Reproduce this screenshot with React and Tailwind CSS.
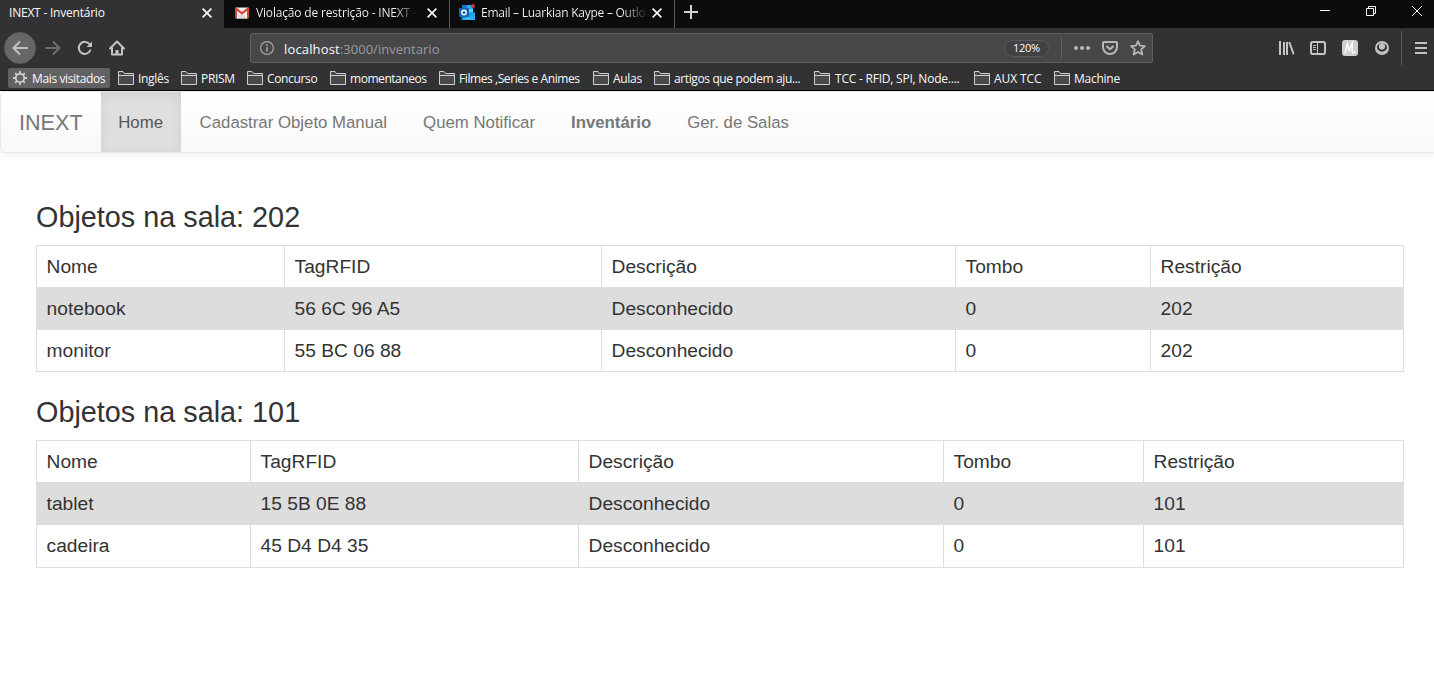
import React from "react";

const bookmarks = [
  { label: "Inglês", width: "w-[43px]", tracking: "tracking-[-0.3px]" },
  { label: "PRISM", width: "w-[46px]", tracking: "tracking-[-0.3px]" },
  { label: "Concurso", width: "w-[63px]", tracking: "tracking-[-0.35px]" },
  { label: "momentaneos", width: "w-[89px]", tracking: "tracking-[-0.45px]" },
  { label: "Filmes ,Series e Animes", width: "w-[134px]", tracking: "tracking-[-0.42px]" },
  { label: "Aulas", width: "w-[41px]", tracking: "tracking-[-0.3px]" },
  { label: "artigos que podem aju...", width: "w-[140px]", tracking: "tracking-[-0.38px]" },
  { label: "TCC - RFID, SPI, Node....", width: "w-[140px] pl-px", tracking: "tracking-[-0.22px]" },
  { label: "AUX TCC", width: "w-[60px]", tracking: "tracking-[-0.1px]" },
  { label: "Machine", width: "w-[60px]", tracking: "tracking-[-0.25px]" },
];

const headers = ["Nome", "TagRFID", "Descrição", "Tombo", "Restrição"];

const rooms = [
  {
    number: "202",
    spacing: "mb-6",
    columns: ["w-[248px]", "w-[317px]", "w-[354px]", "w-[195px]", "w-[253px]"],
    heights: ["h-[42px]", "h-[42px]", "h-[42px]"],
    rows: [
      ["notebook", "56 6C 96 A5", "Desconhecido", "0", "202"],
      ["monitor", "55 BC 06 88", "Desconhecido", "0", "202"],
    ],
  },
  {
    number: "101",
    spacing: "",
    columns: ["w-[214px]", "w-[328px]", "w-[365px]", "w-[200px]", "w-[260px]"],
    heights: ["h-[42px]", "h-[42px]", "h-[43px]"],
    rows: [
      ["tablet", "15 5B 0E 88", "Desconhecido", "0", "101"],
      ["cadeira", "45 D4 D4 35", "Desconhecido", "0", "101"],
    ],
  },
];

function Icon({ children, className = "" }) {
  return (
    <svg
      viewBox="0 0 16 16"
      width="16"
      height="16"
      fill="none"
      stroke="currentColor"
      strokeWidth="2"
      strokeLinecap="round"
      strokeLinejoin="round"
      className={"block shrink-0 " + className}
    >
      {children}
    </svg>
  );
}

function CloseIcon() {
  return (
    <svg viewBox="0 0 10 10" width="10" height="10" className="block shrink-0" stroke="#f9f9fa" strokeWidth="1.7">
      <path d="M0.6 0.6 9.4 9.4M9.4 0.6 0.6 9.4" />
    </svg>
  );
}

function FolderIcon() {
  return (
    <svg viewBox="0 0 16 16" width="16" height="16" className="block shrink-0">
      <path d="M0.5 14.5V1.500H5L6.500 3.500H15.500V14.500Z" fill="#4a4a4c" stroke="#cfcfd0" />
      <path d="M1 5.500H15" stroke="#cfcfd0" />
    </svg>
  );
}

function GearIcon() {
  return (
    <svg viewBox="0 0 16 16" width="16" height="16" className="block shrink-0" fill="none" stroke="#cfcfd0">
      <circle cx="8" cy="8" r="4.200" strokeWidth="1.800" />
      <path
        strokeWidth="1.800"
        d="M8 1V3.5M8 12.5V15M1 8H3.5M12.5 8H15M3.2 3.2 4.8 4.8M11.2 11.2 12.8 12.8M12.8 3.2 11.2 4.8M4.8 11.2 3.2 12.8"
      />
    </svg>
  );
}

function GmailIcon() {
  return (
    <svg viewBox="0 0 14 12" width="14" height="12" className="block shrink-0">
      <path d="M1 0.5H13V11.5H1Z" fill="#f1f1f1" />
      <path d="M2 11.5 7 6.5 12 11.5Z" fill="#dcdcdc" />
      <path d="M0 1.3C0 .6.5.3 1 .3L7 5 13 .3c.5 0 1 .3 1 1V10.700c0 .5-.4.8-.8.8H12V3.800L7 7.700 2 3.800V11.500H.8c-.4 0-.8-.3-.8-.8Z" fill="#dc4437" />
    </svg>
  );
}

function OutlookIcon() {
  return (
    <svg viewBox="0 0 17 17" width="17" height="17" className="block shrink-0">
      <path d="M3 1H14V9H3Z" fill="#28a8ea" />
      <path d="M3 1H8V6H3Z" fill="#0f78d4" />
      <path d="M10 5H14V9H10Z" fill="#50d9ff" />
      <path d="M2.500 8.500H16V16H2.500Z" fill="#1490df" />
      <path d="M16 8 9 12.500 16 16Z" fill="#28a8ea" />
      <path d="M3 16 9 12 16 16Z" fill="#35b8f1" />
      <rect x="0" y="4" width="10" height="9" rx=".7" fill="#0f64b5" />
      <circle cx="5" cy="8.500" r="2.200" fill="none" stroke="#fff" strokeWidth="1.400" />
      <circle cx="14" cy="2" r="2" fill="#d13438" />
    </svg>
  );
}

function TitleBar() {
  return (
    <div className="flex h-7 bg-[#0c0c0d] text-[12px] text-[#f9f9fa]">
      <div className="flex w-56 items-center bg-[#323234] pr-3 pb-[3px] pl-[9px]">
        <span className="grow whitespace-nowrap tracking-[-0.22px]">INEXT - Inventário</span>
        <CloseIcon />
      </div>
      <div className="flex w-[226px] items-center border-r border-[#59595b] pr-3 pb-[3px] pl-[11px]">
        <GmailIcon />
        <span className="mr-[9px] ml-[7px] w-0 grow bg-linear-to-r from-[#f9f9fa] from-85% to-transparent bg-clip-text whitespace-nowrap tracking-[-0.17px] text-transparent">
          Violação de restrição - INEXT -
        </span>
        <CloseIcon />
      </div>
      <div className="flex w-[225px] items-center border-r border-[#59595b] pr-3 pb-[3px] pl-[9px]">
        <OutlookIcon />
        <span className="mr-[6px] ml-[5px] w-0 grow bg-linear-to-r from-[#f9f9fa] from-85% to-[#f9f9fa]/10 bg-clip-text whitespace-nowrap tracking-[-0.25px] text-transparent">
          Email – Luarkian Kaype – Outlo
        </span>
        <CloseIcon />
      </div>
      <div className="flex grow items-center pb-[5px] pl-[9px]">
        <svg viewBox="0 0 14 14" width="14" height="14" stroke="#d0d0d1" strokeWidth="2">
          <path d="M7 0V14M0 7H14" />
        </svg>
      </div>
      <div className="flex items-center gap-9 pr-3 pb-[6px]">
        <svg viewBox="0 0 10 10" width="10" height="10" stroke="#fff">
          <path d="M0 4.500H10" />
        </svg>
        <svg viewBox="0 0 10 10" width="10" height="10" stroke="#fff" fill="none">
          <path d="M0.500 2.500H7.500V9.500H0.500ZM2.500 2.500V0.500H9.500V7.500H7.500" />
        </svg>
        <svg viewBox="0 0 10 10" width="10" height="10" stroke="#fff">
          <path d="M0 0 10 10M10 0 0 10" />
        </svg>
      </div>
    </div>
  );
}

function AddressBar() {
  return (
    <div className="flex h-[30px] w-[903px] items-center rounded-[2px] border border-[#5c5c5e] bg-[#474749] pl-[9px] text-[#b8b8b9]">
      <svg viewBox="0 0 14 14" width="14" height="14" className="block shrink-0" fill="none" stroke="#a6a6a8">
        <circle cx="7" cy="7" r="6.400" strokeWidth="1.200" />
        <path d="M7 6V10.500M7 3.300V4.900" strokeWidth="1.500" />
      </svg>
      <span className="ml-[10px] grow pt-[3px] text-[13px] font-normal tracking-[0.03px] text-[#9b9b9d]">
        <span className="tracking-[0.15px] text-[#f9f9fa]">localhost</span>:3000/inventario
      </span>
      <span className="flex h-[17px] w-[45px] items-center justify-center rounded-full border border-[#59595b] bg-[#414143] pt-px text-[11px] tracking-[-0.3px] text-[#f9f9fa]">
        120%
      </span>
      <span className="ml-3 h-[22px] w-px bg-[#606064]" />
      <svg viewBox="0 0 16 4" width="16" height="4" className="ml-3" fill="currentColor">
        <circle cx="2" cy="2" r="2" />
        <circle cx="8" cy="2" r="2" />
        <circle cx="14" cy="2" r="2" />
      </svg>
      <Icon className="ml-3">
        <path d="M2 2H14a1 1 0 0 1 1 1V7A7 7 0 0 1 1 7V3A1 1 0 0 1 2 2ZM5 6.500 8 9.300 11 6.500" />
      </Icon>
      <Icon className="mr-[6px] ml-3">
        <path
          strokeWidth="1.800"
          d="M8 1.200 10 5.600 14.900 6.100 11.200 9.400 12.300 14.500 8 11.900 3.700 14.500 4.800 9.400 1.100 6.100 6 5.600Z"
        />
      </Icon>
    </div>
  );
}

function Toolbar() {
  return (
    <div className="flex h-[38px] items-center bg-[#323234] pt-[2px] pl-1 text-[#c3c3c4]">
      <span className="flex size-8 shrink-0 items-center justify-center rounded-full border border-[#5c5c5e] bg-[#676769]">
        <Icon>
          <path d="M15 8H1.500M7.500 2 1.500 8 7.500 14" />
        </Icon>
      </span>
      <Icon className="ml-[9px] text-[#6f6f71]">
        <path d="M1 8H14.500M8.500 2 14.500 8 8.500 14" />
      </Icon>
      <Icon className="ml-4">
        <path d="M13.300 10.400A6 6 0 1 1 12.600 4.200" />
        <path d="M15 1.500V7H9.500Z" fill="currentColor" stroke="none" />
      </Icon>
      <Icon className="ml-4">
        <path d="M1 8.500 8 1.500 15 8.500M3 8V14.500H13V8" />
        <path d="M8 14V10" strokeWidth="3" strokeLinecap="butt" />
      </Icon>
      <div className="ml-[125px]">
        <AddressBar />
      </div>
      <div className="ml-[125px] flex items-center gap-4">
        <Icon>
          <path strokeLinecap="butt" d="M2 1V15M6 2V15M9 2V15M11.200 2 15.800 14.500" />
        </Icon>
        <Icon>
          <rect x="1" y="2" width="14" height="12" rx="1.800" />
          <path strokeWidth="1" d="M7.500 2V14M3.500 5.500H5.500M3.500 7.500H5.500M3.500 9.500H5.500" />
        </Icon>
        <svg viewBox="0 0 16 16" width="16" height="16" className="block shrink-0">
          <rect width="16" height="16" rx="3" fill="#cfcfd0" />
          <path
            d="M3 13.500C4 10 4.500 6 5.500 3.500C6 6 6.500 9 7 10.500C8 8 9 5 10.500 2.500C10.500 6 9.500 10 10.500 12.500C11.500 13.500 12.500 12.500 13.500 11.500"
            fill="none"
            stroke="#fff"
            strokeWidth="1.400"
          />
        </svg>
        <svg viewBox="0 0 16 16" width="16" height="16" className="block shrink-0">
          <circle cx="8" cy="8" r="7" fill="currentColor" />
          <path d="M3 8A5 5 0 0 1 13 8Q12.600 9.200 11.800 10Q8 13.600 4.200 10Q3.400 9.200 3 8Z" fill="#323234" />
          <path d="M5 6A3 3 0 0 1 11 6V7.500Q10.800 9.600 8 9.800Q5.200 9.600 5 7.500Z" fill="currentColor" />
        </svg>
      </div>
      <span className="ml-[11px] h-[34px] w-px bg-[#59595b]" />
      <svg viewBox="0 0 12 12" width="12" height="12" className="ml-[13px]" stroke="currentColor" strokeWidth="2">
        <path d="M0 1H12M0 6H12M0 11H12" />
      </svg>
    </div>
  );
}

function BookmarksBar() {
  return (
    <div className="flex h-[25px] items-center border-b border-black bg-[#323234] pl-2 text-[12px] whitespace-nowrap text-[#f9f9fa]">
      <div className="flex h-5 w-[102px] shrink-0 items-center gap-1 rounded-[2px] bg-[#626264] pl-1">
        <GearIcon />
        <span className="pt-[2px] tracking-[-0.37px]">Mais visitados</span>
      </div>
      <div className="flex pl-2">
        {bookmarks.map(({ label, width, tracking }) => (
          <div key={label} className="flex h-[18px] items-center gap-1">
            <FolderIcon />
            <span className={"pt-[2px] " + width + " " + tracking}>{label}</span>
          </div>
        ))}
      </div>
    </div>
  );
}

function Navbar() {
  return (
    <nav className="flex h-[62px] w-[1440px] items-stretch rounded-[5px] border border-[#e7e7e7] bg-linear-to-b from-white to-[#f8f8f8] text-[16.8px] text-[#777] shadow-[inset_0_1px_0_rgba(255,255,255,.15),0_1px_6px_rgba(0,0,0,.075)]">
      <a className="flex items-center px-[18px] pt-[2px] text-[21.6px]">INEXT</a>
      <a className="mr-px flex w-20 items-center justify-center bg-[#dfdfdf] pt-[2px] text-[#555] shadow-[inset_0_3px_11px_rgba(0,0,0,.075)]">
        Home
      </a>
      <a className="flex items-center px-[18px] pt-[2px]">Cadastrar Objeto Manual</a>
      <a className="flex items-center px-[18px] pt-[2px]">Quem Notificar</a>
      <a className="flex items-center px-[18px] pt-[2px] font-bold">Inventário</a>
      <a className="flex items-center px-[18px] pt-[2px]">Ger. de Salas</a>
    </nav>
  );
}

function Room({ room }) {
  return (
    <section className={room.spacing}>
      <h3 className="mb-3 text-[28.8px] leading-8">Objetos na sala: {room.number}</h3>
      <table className="w-[1368px] table-fixed border-collapse text-[19.2px] leading-[27px]">
        <colgroup>
          {room.columns.map((width, i) => (
            <col key={i} className={width} />
          ))}
        </colgroup>
        <tbody>
          {[headers, ...room.rows].map((row, r) => (
            <tr key={r} className={r === 1 ? "bg-[#ddd] " + room.heights[r] : room.heights[r]}>
              {row.map((cell, c) => (
                <td key={c} className="border border-[#ddd] px-[9.600px] pt-[7px] pb-0 align-top">
                  {cell}
                </td>
              ))}
            </tr>
          ))}
        </tbody>
      </table>
    </section>
  );
}

export default function App() {
  return (
    <div className="h-[679px] w-[1434px] overflow-hidden bg-white">
      <header className="font-['Open_Sans','Noto_Sans',sans-serif] font-[450]">
        <TitleBar />
        <Toolbar />
        <BookmarksBar />
      </header>
      <div className="font-['Liberation_Sans',Arial,sans-serif] text-[#333]">
        <Navbar />
        <main className="px-9 pt-12">
          {rooms.map((room) => (
            <Room key={room.number} room={room} />
          ))}
        </main>
      </div>
    </div>
  );
}
